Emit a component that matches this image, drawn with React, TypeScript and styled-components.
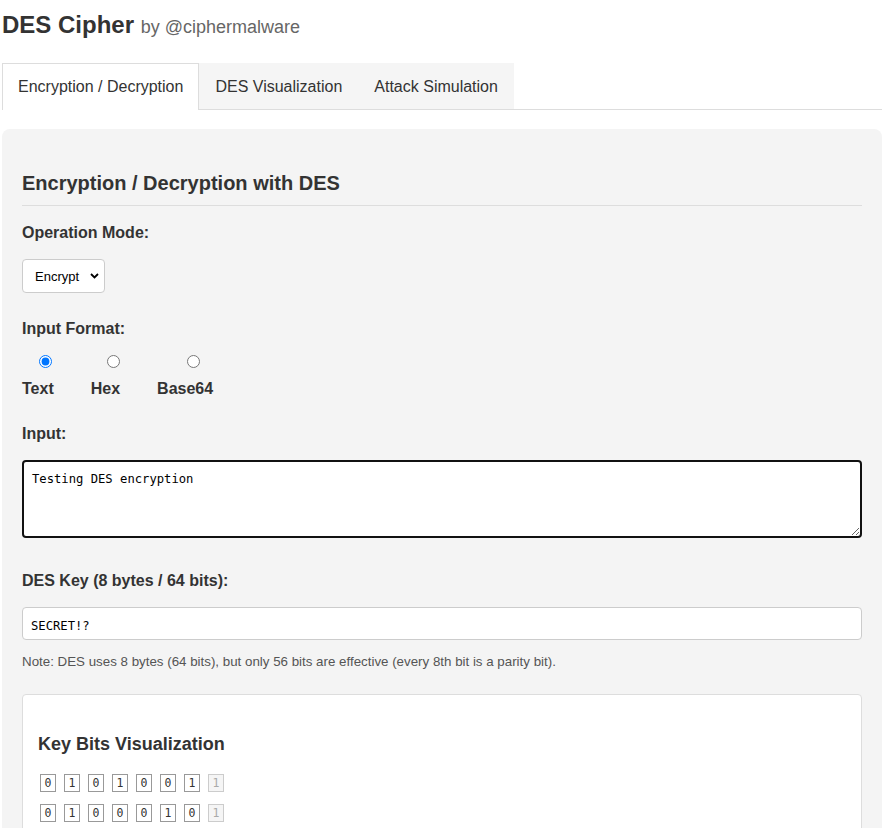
import React, { useState } from "react";
import styled, { createGlobalStyle } from "styled-components";

const GlobalStyle = createGlobalStyle`
  html, body { margin: 0; padding: 0; background: #fff; }
  body {
    font-family: "Liberation Sans", Arial, sans-serif;
    color: #333;
  }
  * { box-sizing: border-box; }
`;

const Page = styled.div`
  padding: 0 3px 0 2px;
`;

const Title = styled.h1`
  margin: 11px 0 24px;
  font-size: 24px;
  font-weight: bold;
  color: #333;
`;

const Byline = styled.span`
  font-size: 18px;
  font-weight: normal;
  color: #666;
`;

const TabList = styled.div`
  display: flex;
  align-items: flex-start;
  border-bottom: 1px solid #ddd;
`;

const Tab = styled.button<{ $active?: boolean }>`
  font-family: "Liberation Sans", Arial, sans-serif;
  font-size: 16px;
  line-height: 21px;
  color: #333;
  cursor: pointer;
  border: 1px solid ${(p) => (p.$active ? "#ddd" : "transparent")};
  border-bottom: none;
  background: ${(p) => (p.$active ? "#fff" : "#f5f5f5")};
  padding: 12px 15px ${(p) => (p.$active ? "13px" : "12px")};
  margin-bottom: ${(p) => (p.$active ? "-1px" : "0")};
`;

const Panel = styled.section`
  margin-top: 19px;
  background: #f4f4f4;
  border-radius: 8px;
  padding: 20px;
`;

const SectionTitle = styled.h2`
  margin: 23px 0 18px;
  padding-bottom: 10px;
  border-bottom: 1px solid #ddd;
  font-size: 20px;
  font-weight: bold;
  color: #333;
`;

const Group = styled.div<{ $mb?: number }>`
  margin-bottom: ${(p) => (p.$mb ?? 27)}px;
`;

const Label = styled.label`
  display: block;
  font-size: 16px;
  font-weight: bold;
  color: #333;
  margin-bottom: 17px;
`;

const SelectWrap = styled.div`
  position: relative;
  width: 83px;
  height: 34px;
`;

const Select = styled.select`
  appearance: none;
  -webkit-appearance: none;
  display: block;
  width: 100%;
  height: 100%;
  padding: 0 0 0 12px;
  border: 1px solid #ccc;
  border-radius: 4px;
  background: #fff;
  font-family: "Liberation Sans", Arial, sans-serif;
  font-size: 13px;
  color: #000;
`;

const Chevron = styled.svg`
  position: absolute;
  right: 6px;
  top: 14px;
  pointer-events: none;
`;

const RadioRow = styled.div`
  display: flex;
  gap: 21px;
`;

const RadioOption = styled.label`
  display: inline-flex;
  flex-direction: column;
  align-items: center;
  cursor: pointer;
`;

const Radio = styled.input`
  width: 13px;
  height: 13px;
  margin: 0 0 12px;
`;

const RadioText = styled.span`
  align-self: stretch;
  padding-right: 16px;
  font-size: 16px;
  font-weight: bold;
  color: #333;
`;

const TextArea = styled.textarea`
  display: block;
  width: 100%;
  height: 78px;
  padding: 10px 8px 8px;
  border: 2px solid #111;
  border-radius: 4px;
  outline: none;
  resize: vertical;
  font-family: "DejaVu Sans Mono", "Liberation Mono", monospace;
  font-size: 12.2px;
  color: #000;
  background: #fff;
`;

const TextInput = styled.input`
  display: block;
  width: 100%;
  height: 33px;
  padding: 4px 8px 0;
  border: 1px solid #ccc;
  border-radius: 4px;
  font-family: "DejaVu Sans Mono", "Liberation Mono", monospace;
  font-size: 12.2px;
  color: #000;
  background: #fff;
`;

const Note = styled.p`
  margin: 14px 0 25px;
  font-size: 13.33px;
  color: #555;
`;

const Card = styled.div`
  background: #fff;
  border: 1px solid #ddd;
  border-radius: 4px;
  padding: 20px 15px;
`;

const CardTitle = styled.h3`
  margin: 19px 0 19px;
  font-size: 18px;
  font-weight: bold;
  color: #333;
`;

const BitRow = styled.div`
  display: flex;
  gap: 8px;
  padding-left: 2px;
  margin-bottom: 12px;
`;

const Bit = styled.span<{ $parity?: boolean }>`
  display: flex;
  align-items: center;
  justify-content: center;
  width: 16px;
  height: 18px;
  border: 1px solid ${(p) => (p.$parity ? "#ccc" : "#999")};
  background: ${(p) => (p.$parity ? "#f5f5f5" : "#fff")};
  color: ${(p) => (p.$parity ? "#aaa" : "#333")};
  font-family: "DejaVu Sans Mono", "Liberation Mono", monospace;
  font-size: 11.5px;
`;

const KEY = "SECRET!?";

export default function App() {
  const [tab, setTab] = useState(0);
  const [format, setFormat] = useState("text");
  const tabs = ["Encryption / Decryption", "DES Visualization", "Attack Simulation"];
  const rows = KEY.split("").map((c) => c.charCodeAt(0).toString(2).padStart(8, "0"));

  return (
    <Page>
      <GlobalStyle />
      <Title>
        DES Cipher <Byline>by @ciphermalware</Byline>
      </Title>
      <TabList>
        {tabs.map((t, i) => (
          <Tab key={t} $active={tab === i} onClick={() => setTab(i)}>
            {t}
          </Tab>
        ))}
      </TabList>
      <Panel>
        <SectionTitle>Encryption / Decryption with DES</SectionTitle>

        <Group>
          <Label>Operation Mode:</Label>
          <SelectWrap>
            <Select defaultValue="encrypt">
              <option value="encrypt">Encrypt</option>
              <option value="decrypt">Decrypt</option>
            </Select>
            <Chevron width="9" height="6" viewBox="0 0 9 6">
              <path d="M1 1l3.5 3.5L8 1" fill="none" stroke="#000" strokeWidth="1.8" />
            </Chevron>
          </SelectWrap>
        </Group>

        <Group>
          <Label>Input Format:</Label>
          <RadioRow>
            {[
              ["text", "Text"],
              ["hex", "Hex"],
              ["base64", "Base64"],
            ].map(([v, l]) => (
              <RadioOption key={v}>
                <Radio
                  type="radio"
                  name="fmt"
                  checked={format === v}
                  onChange={() => setFormat(v)}
                />
                <RadioText>{l}</RadioText>
              </RadioOption>
            ))}
          </RadioRow>
        </Group>

        <Group $mb={34}>
          <Label>Input:</Label>
          <TextArea defaultValue="Testing DES encryption" />
        </Group>

        <Group $mb={0}>
          <Label>DES Key (8 bytes / 64 bits):</Label>
          <TextInput defaultValue={KEY} />
        </Group>
        <Note>
          Note: DES uses 8 bytes (64 bits), but only 56 bits are effective (every 8th bit is a parity bit).
        </Note>

        <Card>
          <CardTitle>Key Bits Visualization</CardTitle>
          {rows.map((r, ri) => (
            <BitRow key={ri}>
              {r.split("").map((b, bi) => (
                <Bit key={bi} $parity={bi === 7}>
                  {b}
                </Bit>
              ))}
            </BitRow>
          ))}
        </Card>
      </Panel>
    </Page>
  );
}
